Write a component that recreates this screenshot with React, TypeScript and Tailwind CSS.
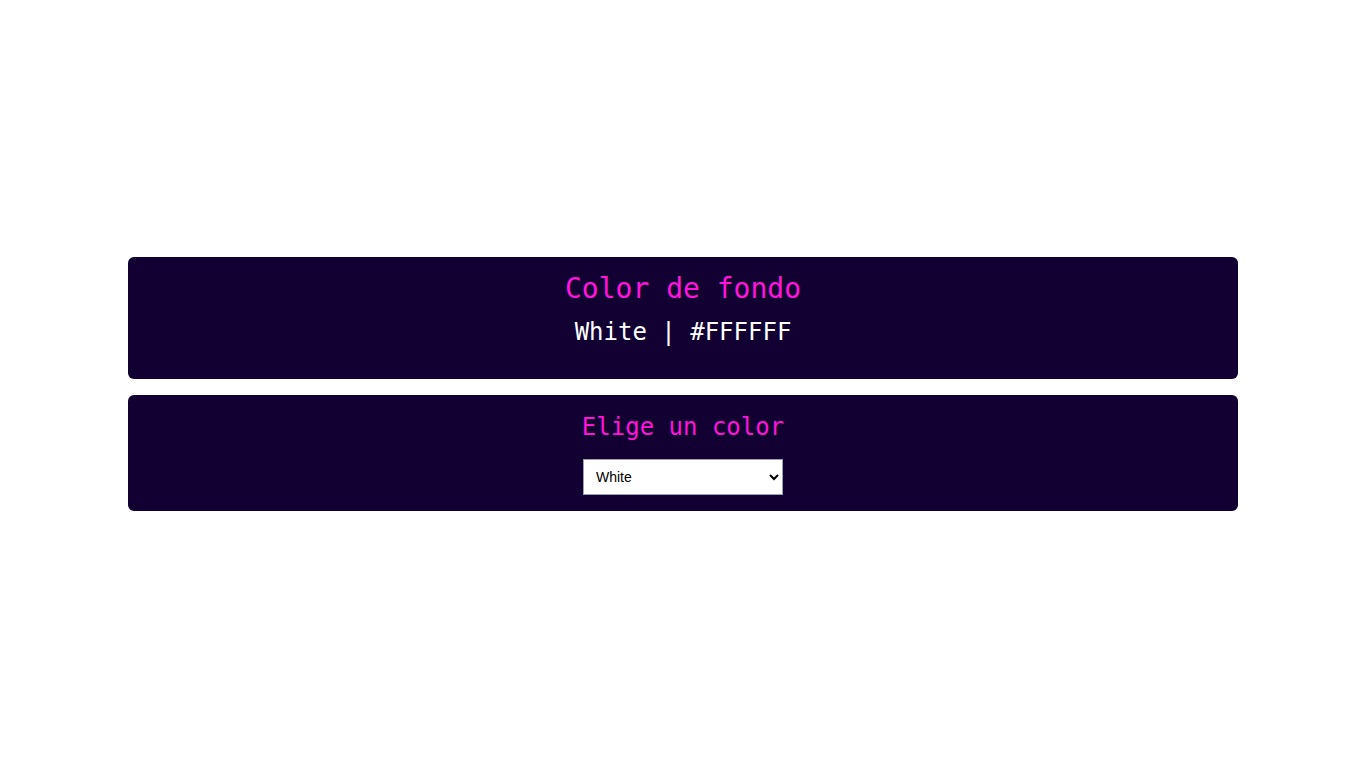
import React, { useState } from "react";

export default function App() {
  const [color, setColor] = useState("White");
  return (
    <div className="min-h-screen w-full bg-white flex flex-col justify-center px-[128px] gap-4" style={{ fontFamily: '"DejaVu Sans Mono", "Liberation Mono", monospace' }}>
      <div className="bg-[#120033] rounded-md pt-[15px] pb-[32px] flex flex-col items-center">
        <h2 className="text-[28px] leading-[34px] text-[#ff14dc] m-0">Color de fondo</h2>
        <p className="text-[24px] leading-[29px] text-white mt-3">White | #FFFFFF</p>
      </div>
      <div className="bg-[#120033] rounded-md pt-[18px] pb-[16px] flex flex-col items-center">
        <h3 className="text-[24px] leading-[29px] text-[#ff14dc]">Elige un color</h3>
        <select
          value={color}
          onChange={(e) => setColor(e.target.value)}
          className="mt-[17px] w-[200px] h-[36px] bg-white text-black text-[14px] border border-gray-400 pl-2"
          style={{ fontFamily: '"Liberation Sans", Arial, sans-serif' }}
        >
          <option>White</option>
          <option>Black</option>
          <option>Red</option>
          <option>Blue</option>
        </select>
      </div>
    </div>
  );
}
